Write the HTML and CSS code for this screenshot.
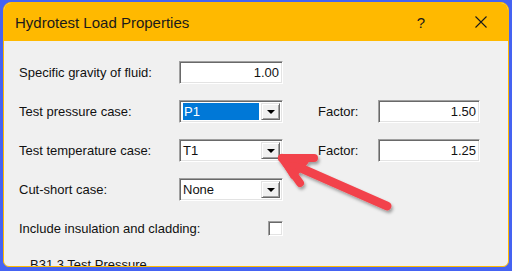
FILE: index.html
```html
<!DOCTYPE html>
<html lang="en">
<head>
    <meta charset="UTF-8">
    <title>Hydrotest Load Properties</title>
    <link rel="stylesheet" href="styles.css">
</head>
<body>

    <div class="frame">
        <div class="window">
            <div class="titlebar">
                <span class="title">Hydrotest Load Properties</span>
                <span class="help">?</span>
                <svg class="close" width="12" height="12" viewBox="0 0 12 12">
                    <path d="M0.5 0.5 L11.5 11.5 M11.5 0.5 L0.5 11.5" stroke="#1a1a1a" stroke-width="1.1" fill="none"/>
                </svg>
            </div>

            <div class="content">
                <div class="form">
                    <label class="label">Specific gravity of fluid:</label>
                    <div class="field num">1.00</div>
                    <span></span><span></span><span></span>

                    <label class="label">Test pressure case:</label>
                    <div class="combo">
                        <div class="combo-text"><span class="selected">P1</span></div>
                        <div class="combo-btn"><span class="caret"></span></div>
                    </div>
                    <span></span>
                    <label class="label">Factor:</label>
                    <div class="field num">1.50</div>

                    <label class="label">Test temperature case:</label>
                    <div class="combo">
                        <div class="combo-text">T1</div>
                        <div class="combo-btn"><span class="caret"></span></div>
                    </div>
                    <span></span>
                    <label class="label">Factor:</label>
                    <div class="field num">1.25</div>

                    <label class="label">Cut-short case:</label>
                    <div class="combo">
                        <div class="combo-text">None</div>
                        <div class="combo-btn"><span class="caret"></span></div>
                    </div>
                    <span></span><span></span><span></span>

                    <label class="label">Include insulation and cladding:</label>
                    <div class="check"></div>
                    <span></span><span></span><span></span>
                </div>

                <div class="group-label">B31.3 Test Pressure</div>
            </div>
        </div>

        <!-- annotation arrow -->
        <svg class="arrow" width="512" height="271" viewBox="0 0 512 271">
            <defs>
                <filter id="shadow" x="-20%" y="-20%" width="140%" height="140%">
                    <feDropShadow dx="1.5" dy="2.5" stdDeviation="1.8" flood-color="#000" flood-opacity="0.35"/>
                </filter>
            </defs>
            <g filter="url(#shadow)" stroke="#f2434b" fill="#f2434b" stroke-linecap="round" stroke-linejoin="round">
                <line x1="296" y1="166" x2="387" y2="206" stroke-width="9"/>
                <line x1="282" y1="158" x2="314" y2="158" stroke-width="8"/>
                <line x1="282" y1="158" x2="300" y2="183" stroke-width="8"/>
                <polygon points="282,158 306,161 293,176" stroke-width="6"/>
            </g>
        </svg>
    </div>

</body>
</html>
```

FILE: styles.css
```css
/* Page */
body {
    margin: 0;
    padding: 0;
    background: #4563f2;
}

/* Outer highlight frame */
.frame {
    position: relative;
    width: 512px;
    height: 271px;
    box-sizing: border-box;
    padding: 2px 3px 4px 3px;
    background: #4563f2;
}

/* Dialog window */
.window {
    height: 100%;
    box-sizing: border-box;
    border: 1px solid #ffb900;
    border-radius: 8px 8px 6px 6px;
    overflow: hidden;
    background: #f0f0f0;
    display: flex;
    flex-direction: column;
}

.titlebar {
    height: 38px;
    flex: none;
    background: #ffb900;
    display: flex;
    align-items: center;
    padding-left: 11px;
    font-family: "Liberation Sans", Arial, sans-serif;
    color: #1a1a1a;
}

.title {
    font-size: 15px;
    flex: 1;
}

.help {
    font-size: 15px;
    margin-right: 50px;
}

.close {
    margin-right: 21px;
}

/* Dialog content */
.content {
    flex: 1;
    overflow: hidden;
    padding: 20px 0 0 15px;
    font-family: "Liberation Sans", Arial, sans-serif;
    font-size: 13px;
    color: #111;
}

.form {
    display: grid;
    grid-template-columns: 160px 104px 35px 60px 102px;
    grid-auto-rows: 23px;
    row-gap: 16px;
    align-items: center;
}

.label {
    white-space: nowrap;
}

/* Sunken edit field */
.field {
    height: 23px;
    box-sizing: border-box;
    background: #fff;
    border: 1px solid;
    border-color: #a0a0a0 #fff #fff #a0a0a0;
    box-shadow: inset 1px 1px 0 #696969, inset -1px -1px 0 #e3e3e3;
    line-height: 21px;
    padding: 0 3px;
}

.num {
    text-align: right;
}

/* Combo box */
.combo {
    height: 23px;
    box-sizing: border-box;
    background: #fff;
    border: 1px solid;
    border-color: #a0a0a0 #fff #fff #a0a0a0;
    box-shadow: inset 1px 1px 0 #696969, inset -1px -1px 0 #e3e3e3;
    display: flex;
    padding: 2px;
}

.combo-text {
    flex: 1;
    line-height: 17px;
    padding-left: 1px;
}

.selected {
    display: block;
    background: #0078d7;
    color: #fff;
    margin-right: 2px;
    padding-left: 1px;
}

.combo-btn {
    width: 19px;
    box-sizing: border-box;
    background: #f0f0f0;
    border: 1px solid;
    border-color: #e3e3e3 #696969 #696969 #e3e3e3;
    box-shadow: inset 1px 1px 0 #fff, inset -1px -1px 0 #a0a0a0;
    display: flex;
    align-items: center;
    justify-content: center;
}

.caret {
    width: 0;
    height: 0;
    border-left: 4px solid transparent;
    border-right: 4px solid transparent;
    border-top: 4px solid #000;
    margin-top: 1px;
}

/* Checkbox */
.check {
    justify-self: end;
    width: 15px;
    height: 15px;
    box-sizing: border-box;
    background: #fff;
    border: 1px solid;
    border-color: #a0a0a0 #fff #fff #a0a0a0;
    box-shadow: inset 1px 1px 0 #696969, inset -1px -1px 0 #e3e3e3;
}

.group-label {
    margin-top: 17px;
    padding-left: 11px;
}

/* Annotation overlay */
.arrow {
    position: absolute;
    left: 0;
    top: 0;
    pointer-events: none;
}
```
